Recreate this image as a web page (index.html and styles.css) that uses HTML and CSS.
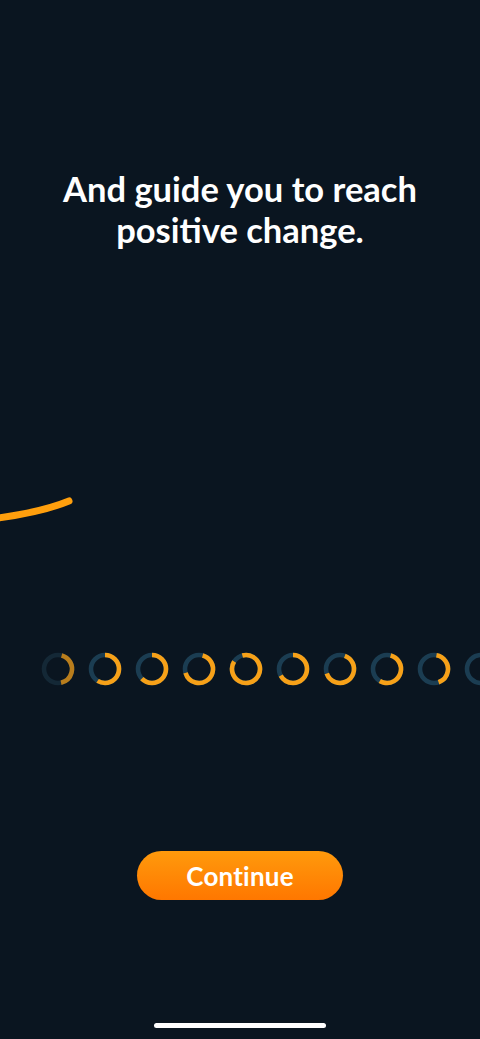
FILE: index.html
```html
<!DOCTYPE html>
<html lang="en">
<head>
<meta charset="utf-8">
<title>Onboarding</title>
<link rel="stylesheet" href="styles.css">
</head>
<body>
<main class="screen">
  <h1 class="title">And guide you to reach<br>positive change.</h1>

  <svg class="swoosh" width="480" height="60" viewBox="0 0 480 60" aria-hidden="true">
    <path d="M -10 43 Q 40 37 69 25" fill="none" stroke="#ff9f0d" stroke-width="7" stroke-linecap="round"/>
  </svg>

  <div class="rings">
    <svg class="ring dim" viewBox="0 0 36 36"><circle class="track" cx="18" cy="18" r="14"/><circle class="arc" cx="18" cy="18" r="14" stroke-dasharray="37 88" transform="rotate(-75 18 18)"/></svg>
    <svg class="ring" viewBox="0 0 36 36"><circle class="track" cx="18" cy="18" r="14"/><circle class="arc" cx="18" cy="18" r="14" stroke-dasharray="51.5 88" transform="rotate(-90 18 18)"/></svg>
    <svg class="ring" viewBox="0 0 36 36"><circle class="track" cx="18" cy="18" r="14"/><circle class="arc" cx="18" cy="18" r="14" stroke-dasharray="55 88" transform="rotate(-90 18 18)"/></svg>
    <svg class="ring" viewBox="0 0 36 36"><circle class="track" cx="18" cy="18" r="14"/><circle class="arc" cx="18" cy="18" r="14" stroke-dasharray="58 88" transform="rotate(-75 18 18)"/></svg>
    <svg class="ring" viewBox="0 0 36 36"><circle class="track" cx="18" cy="18" r="14"/><circle class="arc" cx="18" cy="18" r="14" stroke-dasharray="77 88" transform="rotate(-105 18 18)"/></svg>
    <svg class="ring" viewBox="0 0 36 36"><circle class="track" cx="18" cy="18" r="14"/><circle class="arc" cx="18" cy="18" r="14" stroke-dasharray="58.6 88" transform="rotate(-90 18 18)"/></svg>
    <svg class="ring" viewBox="0 0 36 36"><circle class="track" cx="18" cy="18" r="14"/><circle class="arc" cx="18" cy="18" r="14" stroke-dasharray="56 88" transform="rotate(-70 18 18)"/></svg>
    <svg class="ring" viewBox="0 0 36 36"><circle class="track" cx="18" cy="18" r="14"/><circle class="arc" cx="18" cy="18" r="14" stroke-dasharray="47.6 88" transform="rotate(-75 18 18)"/></svg>
    <svg class="ring" viewBox="0 0 36 36"><circle class="track" cx="18" cy="18" r="14"/><circle class="arc" cx="18" cy="18" r="14" stroke-dasharray="36.6 88" transform="rotate(-80 18 18)"/></svg>
    <svg class="ring" viewBox="0 0 36 36"><circle class="track" cx="18" cy="18" r="14"/><circle class="arc" cx="18" cy="18" r="14" stroke-dasharray="20 88" transform="rotate(-80 18 18)"/></svg>
  </div>

  <button class="cta" type="button">Continue</button>

  <div class="home-indicator"></div>
</main>
</body>
</html>
```

FILE: styles.css
```css
* { box-sizing: border-box; }

html, body {
  margin: 0;
  padding: 0;
  background: #0a1520;
}

.screen {
  width: 480px;
  height: 1039px;
  overflow: hidden;
  display: flex;
  flex-direction: column;
  align-items: center;
  background: #0a1520;
  font-family: "Lato", "Noto Sans", sans-serif;
}

.title {
  margin: 168px 0 0;
  color: #ffffff;
  font-size: 34.5px;
  font-weight: 700;
  line-height: 41px;
  text-align: center;
  letter-spacing: 0;
}

.swoosh {
  display: block;
  margin-top: 226px;
  align-self: flex-start;
}

.rings {
  align-self: flex-start;
  display: flex;
  gap: 11px;
  margin-top: 115px;
  padding-left: 40px;
}

.ring {
  width: 36px;
  height: 36px;
  flex: none;
  display: block;
}

.ring .track {
  fill: none;
  stroke: #1b3d52;
  stroke-width: 4.6;
}

.ring .arc {
  fill: none;
  stroke: #f7a118;
  stroke-width: 4.6;
}

.ring.dim .track { stroke: #142836; }
.ring.dim .arc { stroke: #b97d1c; }

.cta {
  margin-top: 164px;
  width: 206px;
  height: 49px;
  border: none;
  border-radius: 25px;
  background: linear-gradient(180deg, #ff9a0c 0%, #ff7700 100%);
  color: #ffffff;
  font-family: "Lato", "Noto Sans", sans-serif;
  font-size: 26px;
  font-weight: 700;
  letter-spacing: 0.2px;
  padding: 0;
}

.home-indicator {
  margin-top: 123px;
  width: 172px;
  height: 5px;
  border-radius: 3px;
  background: #ffffff;
}
```
